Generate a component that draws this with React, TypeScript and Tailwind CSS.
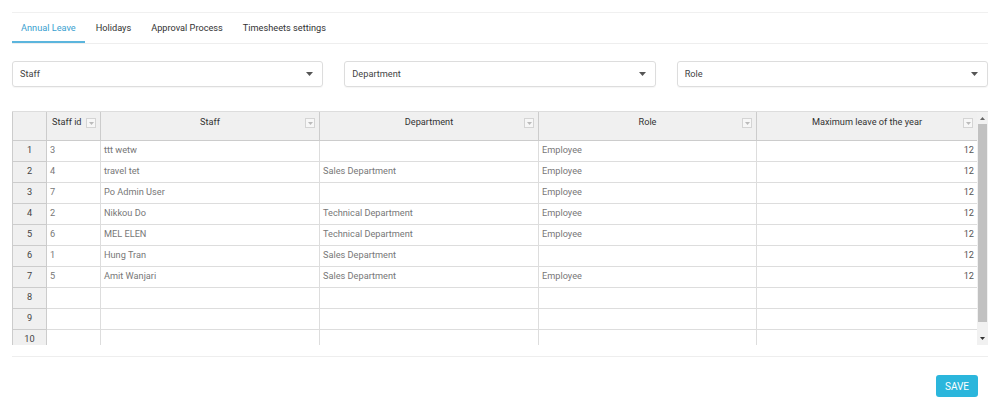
import React from 'react';

const tabs = ['Annual Leave', 'Holidays', 'Approval Process', 'Timesheets settings'];
const filters = ['Staff', 'Department', 'Role'];

type Row = { id: string; staff: string; dept: string; role: string; max: string };

const rows: Row[] = [
  { id: '3', staff: 'ttt wetw', dept: '', role: 'Employee', max: '12' },
  { id: '4', staff: 'travel tet', dept: 'Sales Department', role: 'Employee', max: '12' },
  { id: '7', staff: 'Po Admin User', dept: '', role: 'Employee', max: '12' },
  { id: '2', staff: 'Nikkou Do', dept: 'Technical Department', role: 'Employee', max: '12' },
  { id: '6', staff: 'MEL ELEN', dept: 'Technical Department', role: 'Employee', max: '12' },
  { id: '1', staff: 'Hung Tran', dept: 'Sales Department', role: '', max: '12' },
  { id: '5', staff: 'Amit Wanjari', dept: 'Sales Department', role: 'Employee', max: '12' },
  { id: '', staff: '', dept: '', role: '', max: '' },
  { id: '', staff: '', dept: '', role: '', max: '' },
  { id: '', staff: '', dept: '', role: '', max: '' },
];

const cols = 'grid grid-cols-[35px_54px_219px_219px_218px_221px]';

const FilterBox = () => (
  <span className="absolute right-[4px] top-[6px] flex h-[10px] w-[10px] items-center justify-center border border-[#d4d4d4] bg-[#f7f7f7]">
    <svg width="5" height="3" viewBox="0 0 5 3">
      <path d="M0 0h5L2.5 3z" fill="#bbb" />
    </svg>
  </span>
);

const Caret = () => (
  <svg width="7" height="4" viewBox="0 0 7 4">
    <path d="M0 0h7L3.5 4z" fill="#555" />
  </svg>
);

const App: React.FC = () => {
  return (
    <div className="h-[408px] w-[1000px] bg-white px-3 pt-3 font-['Roboto',sans-serif] text-[9.2px] text-[#333]">
      <div className="border-t border-[#f0f0f0]" />

      {/* Tabs */}
      <div className="flex h-[31px] gap-[2px] border-b border-[#eee]">
        {tabs.map((t, i) => (
          <div
            key={t}
            className={`flex items-center px-[9px] pt-[1px] ${
              i === 0 ? 'border-b-2 border-[#5bb5dd] text-[#3a9fd0]' : 'border-b-2 border-transparent text-[#333]'
            }`}
          >
            {t}
          </div>
        ))}
      </div>

      {/* Filters */}
      <div className="mt-[17px] grid grid-cols-3 gap-[21px]">
        {filters.map((f) => (
          <div
            key={f}
            className="flex h-[26px] items-center justify-between rounded-[3px] border border-[#ddd] pl-[7px] pr-[9px] text-[#444] shadow-[0_1px_1px_rgba(0,0,0,0.04)]"
          >
            <span>{f}</span>
            <Caret />
          </div>
        ))}
      </div>

      {/* Table */}
      <div className="mt-[24px] flex h-[234px] border-t border-[#ddd]">
        <div className="flex-1 overflow-hidden">
          <div className={`${cols} h-[29px] bg-[#f0f0f0] text-[#333]`}>
            <div className="border-b border-l border-r border-[#ccc]" />
            <div className="relative border-b border-r border-[#ccc] pl-[5px] pt-[3px]">
              Staff id
              <FilterBox />
            </div>
            {['Staff', 'Department', 'Role', 'Maximum leave of the year'].map((h) => (
              <div key={h} className="relative border-b border-r border-[#ccc] pt-[3px] text-center">
                {h}
                <FilterBox />
              </div>
            ))}
          </div>
          {rows.map((r, i) => (
            <div key={i} className={`${cols} h-[21px] text-[#777]`}>
              <div className="flex items-center justify-center border-b border-l border-r border-[#ccc] bg-[#f0f0f0] pb-[3px] text-[#444]">
                {i + 1}
              </div>
              <div className="flex items-center border-b border-r border-[#ddd] pb-[3px] pl-[3px]">{r.id}</div>
              <div className="flex items-center border-b border-r border-[#ddd] pb-[3px] pl-[3px]">{r.staff}</div>
              <div className="flex items-center border-b border-r border-[#ddd] pb-[3px] pl-[3px]">{r.dept}</div>
              <div className="flex items-center border-b border-r border-[#ddd] pb-[3px] pl-[3px]">{r.role}</div>
              <div className="flex items-center justify-end border-b border-[#ddd] pb-[3px] pr-[4px] text-[#555]">{r.max}</div>
            </div>
          ))}
        </div>
        <div className="flex w-[11px] flex-col bg-[#f1f1f1]">
          <div className="flex h-[12px] items-center justify-center">
            <svg width="5" height="3" viewBox="0 0 5 3">
              <path d="M2.5 0L5 3H0z" fill="#666" />
            </svg>
          </div>
          <div className="mx-[1px] h-[198px] bg-[#c1c1c1]" />
          <div className="flex-1" />
          <div className="flex h-[14px] items-center justify-center">
            <svg width="5" height="3" viewBox="0 0 5 3">
              <path d="M0 0h5L2.5 3z" fill="#333" />
            </svg>
          </div>
        </div>
      </div>

      <div className="mt-[11px] border-t border-[#eee]" />

      <div className="mt-[18px] flex justify-end pr-[10px]">
        <button className="h-[22px] w-[42px] rounded-[3px] bg-[#2bb6dc] text-[10px] text-white">SAVE</button>
      </div>
    </div>
  );
};

export default App;
